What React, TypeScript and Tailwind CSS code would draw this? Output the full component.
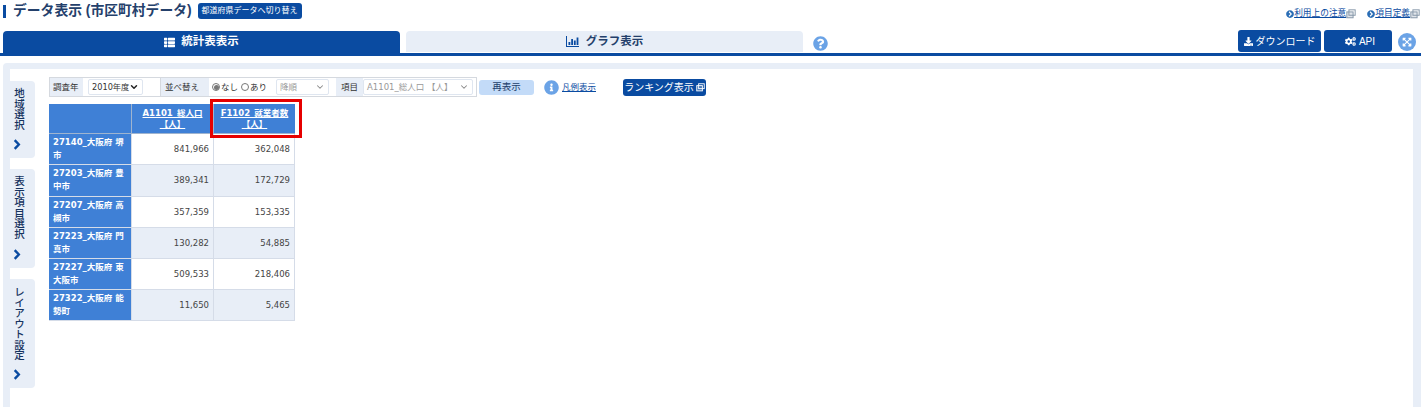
import React from "react";
import { ChevronDown } from "lucide-react";
import { FaThList, FaCogs, FaDownload, FaChevronCircleRight, FaInfoCircle, FaQuestionCircle, FaExpandArrowsAlt } from "react-icons/fa";

const FONT = "font-['DejaVu_Sans','Noto_Sans_CJK_JP',sans-serif]";
const JP = "font-['Liberation_Sans','Noto_Sans_CJK_JP',sans-serif]";

const rows = [
  { name: "27140_大阪府 堺市", pop: "841,966", workers: "362,048", h: "h-[31px]" },
  { name: "27203_大阪府 豊中市", pop: "389,341", workers: "172,729", h: "h-[32px]" },
  { name: "27207_大阪府 高槻市", pop: "357,359", workers: "153,335", h: "h-[31px]" },
  { name: "27223_大阪府 門真市", pop: "130,282", workers: "54,885", h: "h-[31px]" },
  { name: "27227_大阪府 東大阪市", pop: "509,533", workers: "218,406", h: "h-[31px]" },
  { name: "27322_大阪府 能勢町", pop: "11,650", workers: "5,465", h: "h-[31px]" },
];

const WindowIcon = ({ className = "" }: { className?: string }) => (
  <svg viewBox="0 0 12 12" className={className} fill="none" stroke="currentColor" strokeWidth="1.2">
    <rect x="3.5" y="1" width="7.5" height="6.5" />
    <rect x="1" y="3.5" width="7.5" height="7" fill="currentColor" fillOpacity="0.25" />
  </svg>
);

const BarChartIcon = ({ className = "" }: { className?: string }) => (
  <svg viewBox="0 0 13 11" className={className} fill="currentColor">
    <path d="M0 0h1v10h12v1H0z" />
    <rect x="2.5" y="6" width="1.8" height="3" />
    <rect x="5.2" y="3" width="1.8" height="6" />
    <rect x="7.9" y="4.5" width="1.8" height="4.5" />
    <rect x="10.6" y="1.5" width="1.8" height="7.5" />
  </svg>
);

const SideTab = ({ label, className }: { label: string; className: string }) => (
  <div className={`flex w-[32px] flex-col items-center rounded-r-[4px] bg-[#e8eef7] text-[#0a4ba1] ${className}`}>
    <div className={`text-[10.5px] leading-[14px] font-medium text-[#16335f] [writing-mode:vertical-rl] ${JP}`}>{label}</div>
    <svg viewBox="0 0 8 12" className="mt-auto mb-[8px] -ml-[4px] h-[11px] w-[8px] shrink-0" fill="none" stroke="currentColor" strokeWidth="2.6">
      <path d="M1.5 1.2 6 6l-4.5 4.8" />
    </svg>
  </div>
);

const Label = ({ children, className = "" }: { children: React.ReactNode; className?: string }) => (
  <div className={`flex h-full shrink-0 items-center bg-[#e8eef7] text-[8.5px] whitespace-nowrap text-[#333] ${JP} ${className}`}>{children}</div>
);

const FakeSelect = ({ text, className, dark }: { text: string; className: string; dark?: boolean }) => (
  <div className={`flex h-[16px] shrink-0 items-center justify-between rounded-[2px] border border-[#dfe6f0] bg-white px-[3px] ${dark ? "text-[8.2px] text-[#333]" : "text-[8.5px] text-[#999]"} ${className}`}>
    <span className="whitespace-nowrap">{text}</span>
    <ChevronDown className={`h-[10px] w-[10px] shrink-0 ${dark ? "text-[#222]" : "text-[#888]"}`} strokeWidth={dark ? 3.5 : 2.5} />
  </div>
);

const Radio = ({ checked, label, className = "" }: { checked?: boolean; label: string; className?: string }) => (
  <label className={`flex shrink-0 items-center gap-[1px] text-[8.5px] whitespace-nowrap text-[#333] ${JP} ${className}`}>
    <span className="flex h-[8px] w-[8px] items-center justify-center rounded-full border border-[#777]">
      {checked && <span className="h-[5px] w-[5px] rounded-full bg-[#777]" />}
    </span>
    {label}
  </label>
);

export default function App() {
  return (
    <div className={`flex h-[407px] w-[1421px] flex-col overflow-hidden bg-white ${FONT}`}>
      {/* title row */}
      <div className="flex h-[31px] items-start justify-between">
        <div className="flex h-[22px] items-center pl-[3px]">
          <div className="h-[13px] w-[3px] bg-[#0a4ba1]" />
          <h1 className={`ml-[7px] text-[13.8px] leading-[20px] font-bold whitespace-nowrap text-[#24406b] ${JP}`}>データ表示 (市区町村データ)</h1>
          <button className={`ml-[6px] flex h-[16px] w-[104px] shrink-0 items-center justify-center rounded-[3px] bg-[#0a4ba1] text-[8px] whitespace-nowrap text-white ${JP}`}>
            都道府県データへ切り替え
          </button>
        </div>
        <div className={`flex items-center pt-[7px] pr-[1px] text-[8.7px] text-[#0a4ba1] ${JP}`}>
          <FaChevronCircleRight className="h-[8px] w-[8px] text-[#2a6db5]" />
          <a className="underline">利用上の注意</a>
          <WindowIcon className="h-[10px] w-[10px] text-[#8899aa]" />
          <FaChevronCircleRight className="ml-[11px] h-[8px] w-[8px] text-[#2a6db5]" />
          <a className="underline">項目定義</a>
          <WindowIcon className="h-[10px] w-[10px] text-[#8899aa]" />
        </div>
      </div>

      {/* tabs row */}
      <div className="flex h-[25px] items-stretch border-b-[3px] border-[#0a4ba1] pl-[3px]">
        <div className={`flex h-[22px] w-[397px] items-center justify-center gap-[6px] rounded-t-[4px] bg-[#0a4ba1] text-[11.5px] font-bold text-white ${JP}`}>
          <FaThList className="h-[11px] w-[11px]" />
          統計表表示
        </div>
        <div className={`ml-[6px] flex h-[21px] w-[397px] items-center justify-center gap-[7px] rounded-t-[4px] bg-[#e8eef7] text-[11.5px] font-bold text-[#24406b] ${JP}`}>
          <BarChartIcon className="h-[11px] w-[13px] text-[#0a4ba1]" />
          グラフ表示
        </div>
        <FaQuestionCircle className="mt-[5px] ml-[10px] h-[15px] w-[15px] text-[#6ba3e6]" />
        <div className="ml-auto flex h-[23px] items-start pr-[5px]">
          <button className={`flex h-[22px] w-[83px] -translate-y-px items-center justify-center gap-[3px] rounded-[3px] bg-[#0a4ba1] text-[10px] whitespace-nowrap text-white ${JP}`}>
            <FaDownload className="h-[9px] w-[9px]" />
            ダウンロード
          </button>
          <button className={`ml-[3px] flex h-[22px] w-[68px] -translate-y-px items-center justify-center gap-[3px] rounded-[3px] bg-[#0a4ba1] pl-[4px] text-[10px] text-white ${JP}`}>
            <FaCogs className="h-[11px] w-[11px]" />
            API
          </button>
          <div className="mt-[2px] ml-[6px] flex h-[18px] w-[18px] items-center justify-center rounded-full bg-[#6ba3e6] text-white">
            <FaExpandArrowsAlt className="h-[10px] w-[10px]" />
          </div>
        </div>
      </div>

      {/* body */}
      <div className="mt-[7px] ml-[3px] flex flex-1 rounded-tl-[4px] bg-[#e8eef7] pt-[6px]">
        <div className="flex flex-1 bg-white">
          {/* side tabs */}
          <div className="flex w-[32px] flex-col gap-[11px] bg-[linear-gradient(to_right,#e8eef7_7px,transparent_7px)] pt-[12px]">
            <SideTab label="地域選択" className="h-[77px] pt-[7px]" />
            <SideTab label="表示項目選択" className="h-[99px] pt-[7px]" />
            <SideTab label="レイアウト設定" className="h-[109px] pt-[8px]" />
          </div>

          <div className="ml-[14px] flex flex-col pt-[8px]">
            {/* toolbar */}
            <div className="flex items-center">
              <div className="flex h-[20px] w-[428px] items-center border border-[#d5d9df] bg-white">
                <Label className="w-[33px] pl-[3px]">調査年</Label>
                <FakeSelect dark text="2010年度" className={`ml-[5px] w-[55px] ${FONT}`} />
                <div className="ml-[17px] h-full w-px shrink-0 bg-[#d5d9df]" />
                <Label className="w-[48px] pl-[4px]">並べ替え</Label>
                <Radio checked label="なし" className="ml-[3px]" />
                <Radio label="あり" className="ml-[3px]" />
                <FakeSelect text="降順" className={`ml-[9px] w-[53px] ${JP}`} />
                <Label className="ml-[7px] w-[27px] justify-center">項目</Label>
                <FakeSelect text="A1101_総人口 【人】" className="w-[110px]" />
              </div>
              <button className={`ml-[2px] h-[15px] w-[55px] shrink-0 rounded-[3px] bg-[#c3dbf8] text-[9.5px] text-[#24406b] ${JP}`}>再表示</button>
              <FaInfoCircle className="ml-[10px] h-[15px] w-[15px] shrink-0 text-[#6ba3e6]" />
              <a className={`ml-[3px] text-[8.5px] whitespace-nowrap text-[#0a4ba1] underline ${JP}`}>凡例表示</a>
              <button className={`ml-[27px] flex h-[17px] w-[83px] shrink-0 items-center justify-center gap-[2px] rounded-[3px] bg-[#0a4ba1] text-[10px] whitespace-nowrap text-white ${JP}`}>
                ランキング表示
                <WindowIcon className="h-[9px] w-[9px] text-white" />
              </button>
            </div>

            {/* table */}
            <div className="relative mt-[7px] w-[246px]">
              <div className="grid grid-cols-[83px_82px_81px] text-[8.5px]">
                <div className="h-[30px] border-r border-b border-[#9fb4cf] bg-[#3f80d6]" />
                <div className="flex h-[30px] flex-col items-center justify-center border-r border-b border-[#9fb4cf] bg-[#3f80d6] text-center leading-[11px] font-bold text-white underline">
                  <span className="whitespace-nowrap">A1101_総人口</span>
                  <span>【人】</span>
                </div>
                <div className="flex h-[30px] flex-col items-center justify-center border-b border-[#9fb4cf] bg-[#3f80d6] text-center leading-[11px] font-bold text-white underline">
                  <span className="whitespace-nowrap">F1102_就業者数</span>
                  <span>【人】</span>
                </div>
                {rows.map((row, i) => (
                  <React.Fragment key={row.name}>
                    <div className={`${row.h} border-r border-b border-[#d5dce8] bg-[#3f80d6] px-[4px] pt-[2px] text-[8.5px] leading-[13px] font-bold text-white`}>
                      {row.name}
                    </div>
                    <div className={`${row.h} flex items-center justify-end border-r border-b border-[#d5dce8] pr-[4px] text-[8.5px] text-[#444] ${i % 2 ? "bg-[#e8eef7]" : "bg-white"}`}>
                      {row.pop}
                    </div>
                    <div className={`${row.h} flex items-center justify-end border-r border-b border-[#d5dce8] pr-[4px] text-[8.5px] text-[#444] ${i % 2 ? "bg-[#e8eef7]" : "bg-white"}`}>
                      {row.workers}
                    </div>
                  </React.Fragment>
                ))}
              </div>
              <div className="absolute top-[-5px] left-[161px] h-[39px] w-[92px] border-[3px] border-[#e60000]" />
            </div>
          </div>
        </div>
        <div className="w-[9px] border-l border-white" />
      </div>
    </div>
  );
}
